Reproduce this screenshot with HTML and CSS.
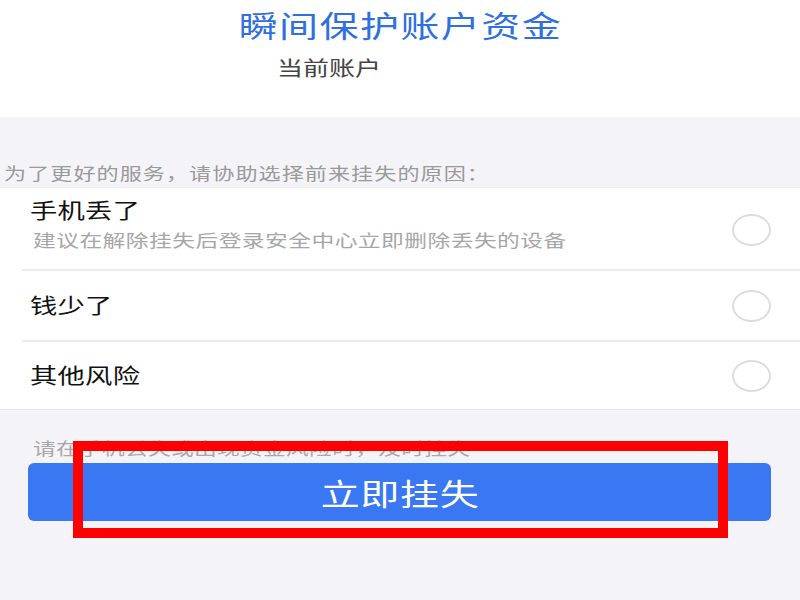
FILE: index.html
```html
<!DOCTYPE html>
<html lang="zh-CN">

<head>
    <meta charset="utf-8">
    <meta name="viewport" content="width=device-width, initial-scale=1.0">
    <title>挂失</title>
    <link rel="stylesheet" href="styles.css">
</head>

<body>
    <!-- 顶部标题 -->
    <div class="header">
        <h1 class="title"><span class="wide wide-center">瞬间保护账户资金</span></h1>
        <div class="account"><span class="wide">当前账户</span></div>
    </div>

    <div class="caption"><span class="wide">为了更好的服务，请协助选择前来挂失的原因：</span></div>

    <!-- 原因列表 -->
    <div class="list">
        <div class="row row-first">
            <div>
                <div class="row-title"><span class="wide">手机丢了</span></div>
                <div class="row-sub"><span class="wide">建议在解除挂失后登录安全中心立即删除丢失的设备</span></div>
            </div>
            <span class="radio"></span>
        </div>
        <div class="row">
            <div class="row-title"><span class="wide">钱少了</span></div>
            <span class="radio"></span>
        </div>
        <div class="row row-last">
            <div class="row-title"><span class="wide">其他风险</span></div>
            <span class="radio"></span>
        </div>
    </div>

    <div class="hint"><span class="wide">请在手机丢失或出现资金风险时，及时挂失</span></div>

    <div class="submit-btn"><span class="wide wide-center">立即挂失</span></div>

    <!-- 标注框 -->
    <div class="mark-box"></div>
</body>

</html>
```

FILE: styles.css
```css
/* 基础样式 */
body {
    margin: 0;
    background-color: #f4f4f8;
    font-family: "Noto Sans CJK SC", "Noto Sans", sans-serif;
}

/* 截图里的文字被横向拉宽 */
.wide {
    display: inline-block;
    transform: scaleX(1.3);
    transform-origin: left center;
    white-space: nowrap;
}

.wide-center {
    transform-origin: center center;
}

/* 顶部白色区域 */
.header {
    background-color: #ffffff;
    height: 117px;
}

.title {
    margin: 0;
    padding-top: 4px;
    font-size: 30px;
    font-weight: normal;
    line-height: 40px;
    letter-spacing: 1.1px;
    color: #2f6fdf;
    text-align: center;
}

.account {
    padding-left: 277px;
    margin-top: 10px;
    font-size: 20px;
    line-height: 28px;
    color: #444;
}

/* 提示说明 */
.caption {
    padding: 44px 0 3px 4px;
    font-size: 17px;
    line-height: 23px;
    letter-spacing: 0.8px;
    color: #9a9a9a;
}

/* 列表 */
.list {
    background-color: #ffffff;
    border-top: 1px solid #ececec;
    border-bottom: 1px solid #e6e6e6;
}

.row {
    display: flex;
    align-items: center;
    justify-content: space-between;
    margin-left: 22px;
    padding: 0 29px 4px 8px;
    height: 65px;
    border-bottom: 2px solid #ececec;
}

.row .radio {
    margin-top: 4px;
}

.row-first {
    height: 81px;
    padding-bottom: 0;
    align-items: flex-start;
}

.row-first > div {
    padding-top: 7px;
}

.row-first .radio {
    margin-top: 26px;
}

.row-last {
    height: 63px;
    border-bottom: none;
}

.row-title {
    font-size: 21px;
    line-height: 28px;
    letter-spacing: 0.2px;
    color: #111;
}

.row-sub {
    margin-top: 6px;
    margin-left: 3px;
    font-size: 17.5px;
    line-height: 22px;
    letter-spacing: 0.35px;
    color: #a6a6a6;
}

/* 单选圆圈 */
.radio {
    width: 35px;
    height: 28px;
    border: 2px solid #dcdcdc;
    border-radius: 50%;
}

.hint {
    padding: 26px 0 0 33px;
    font-size: 17.5px;
    line-height: 23px;
    letter-spacing: 0.2px;
    color: #a8a8a8;
}

/* 提交按钮 */
.submit-btn {
    margin: 4px 29px 0 28px;
    height: 58px;
    background-color: #3a77f2;
    border-radius: 6px;
    color: #ffffff;
    font-size: 30px;
    line-height: 58px;
    letter-spacing: 0.5px;
    text-align: center;
}

/* 红色标注框 */
.mark-box {
    position: absolute;
    left: 73px;
    top: 441px;
    width: 655px;
    height: 97px;
    box-sizing: border-box;
    border: 10px solid #ff0000;
}
```
